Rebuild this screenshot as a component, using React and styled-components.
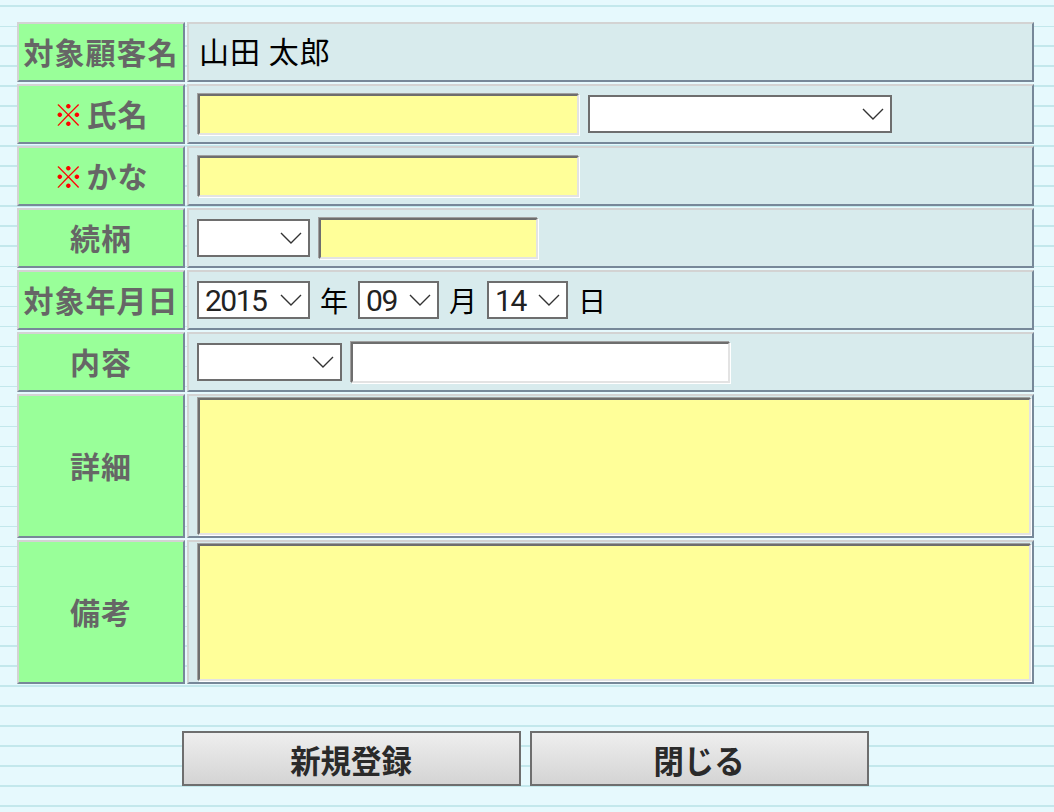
import React from 'react'
import styled, { createGlobalStyle } from 'styled-components'

const GlobalStyle = createGlobalStyle`
  html, body {
    margin: 0;
    padding: 0;
  }
  body {
    min-height: 812px;
    background: repeating-linear-gradient(
      to bottom,
      #e6f9fd 0px,
      #e6f9fd 5.5px,
      #c3e8ec 5.5px,
      #c3e8ec 7.5px,
      #e6f9fd 7.5px,
      #e6f9fd 20px
    );
    font-family: 'Noto Sans CJK JP', 'Noto Sans', sans-serif;
  }
`

const Chevron = () => (
  <svg width="22" height="12" viewBox="0 0 22 12">
    <polyline points="1,1 11,11 21,1" fill="none" stroke="#333" strokeWidth="1.4" />
  </svg>
)

const Select = ({ width, value }) => (
  <SelectBox $width={width}>
    <SelectField defaultValue={value || ''}>
      <option value={value || ''}>{value || ''}</option>
    </SelectField>
    <ChevronWrap>
      <Chevron />
    </ChevronWrap>
  </SelectBox>
)

const App = () => {
  return (
    <>
      <GlobalStyle />
      <Page>
        <FormGrid>
          <Label>対象顧客名</Label>
          <Value>
            <Static>山田 太郎</Static>
          </Value>

          <Label>
            <Required>※</Required>氏名
          </Label>
          <Value>
            <TextInput $width={381} />
            <Select width={304} />
          </Value>

          <Label>
            <Required>※</Required>かな
          </Label>
          <Value>
            <TextInput $width={381} />
          </Value>

          <Label>続柄</Label>
          <Value>
            <Select width={113} />
            <TextInput $width={219} />
          </Value>

          <Label>対象年月日</Label>
          <Value $gap={10}>
            <Select width={113} value="2015" />
            <Unit>年</Unit>
            <Select width={81} value="09" />
            <Unit>月</Unit>
            <Select width={81} value="14" />
            <Unit>日</Unit>
          </Value>

          <Label>内容</Label>
          <Value>
            <Select width={145} />
            <TextInput $width={379} $white />
          </Value>

          <Label $tall>詳細</Label>
          <Value $tall>
            <TextArea />
          </Value>

          <Label $tall>備考</Label>
          <Value $tall>
            <TextArea />
          </Value>
        </FormGrid>

        <Buttons>
          <Button>
            <ButtonText>新規登録</ButtonText>
          </Button>
          <Button>
            <ButtonText>閉じる</ButtonText>
          </Button>
        </Buttons>
      </Page>
    </>
  )
}

export default App

const Page = styled.div`
  padding: 20px 0 0 15px;
`

const FormGrid = styled.div`
  display: grid;
  grid-template-columns: 168px 847px;
  gap: 2px;
  padding: 2px;
  width: max-content;
`

const Cell = styled.div`
  box-sizing: border-box;
  height: ${(p) => (p.$tall ? '144px' : '60px')};
  border: 2px solid;
  border-color: #d3d3d3 #778899 #778899 #d3d3d3;
  display: flex;
  align-items: center;
`

const Label = styled(Cell)`
  background: #99ff99;
  justify-content: center;
  color: #666666;
  font-size: 30px;
  font-weight: 700;
  letter-spacing: 1px;
  white-space: nowrap;
  padding-bottom: 3px;
`

const Required = styled.span`
  color: #ff0000;
  font-weight: 400;
  margin-right: 2px;
`

const Value = styled(Cell)`
  background: #d8ebed;
  padding-left: 8px;
  gap: ${(p) => (p.$gap ? `${p.$gap}px` : '8px')};
  align-items: ${(p) => (p.$tall ? 'flex-start' : 'center')};
`

const Static = styled.span`
  font-size: 30px;
  color: #000;
  margin-left: 2px;
  padding-bottom: 4px;
  letter-spacing: 1px;
`

const Unit = styled.span`
  font-size: 28px;
  color: #000;
  line-height: 1;
`

const TextInput = styled.input.attrs({ type: 'text' })`
  box-sizing: border-box;
  width: ${(p) => p.$width}px;
  height: 41px;
  margin: 0 1px;
  background: ${(p) => (p.$white ? '#ffffff' : '#ffff99')};
  border: 2px solid;
  border-color: #6e6e6e #e3e3e3 #e3e3e3 #6e6e6e;
  box-shadow: -1px -1px 0 #a0a0a0, 1px 1px 0 #ffffff;
  outline: none;
  padding: 0 6px;
  font-size: 26px;
`

const TextArea = styled.textarea`
  box-sizing: border-box;
  flex: 1;
  height: 137px;
  margin: 2px 1px 0 1px;
  background: #ffff99;
  border: 2px solid;
  border-color: #6e6e6e #e3e3e3 #e3e3e3 #6e6e6e;
  box-shadow: -1px -1px 0 #a0a0a0, 1px 1px 0 #ffffff;
  outline: none;
  resize: none;
  font-size: 24px;
`

const SelectBox = styled.div`
  position: relative;
  width: ${(p) => p.$width}px;
  height: 38px;
  flex: none;
`

const SelectField = styled.select`
  appearance: none;
  box-sizing: border-box;
  width: 100%;
  height: 100%;
  margin: 0;
  border: 2px solid #6e6e6e;
  border-radius: 0;
  background: #ffffff;
  padding: 0 0 0 6px;
  font-family: 'Roboto', 'Liberation Sans', sans-serif;
  font-size: 30px;
  letter-spacing: -1.5px;
  color: #222;
  outline: none;
`

const ChevronWrap = styled.span`
  position: absolute;
  right: 8px;
  top: 13px;
  line-height: 0;
  pointer-events: none;
`

const Buttons = styled.div`
  display: flex;
  gap: 9px;
  margin-top: 45px;
  padding-left: 167px;
`

const Button = styled.button`
  box-sizing: border-box;
  width: 339px;
  height: 55px;
  border: 2px solid #6e6e6e;
  border-radius: 0;
  background: linear-gradient(to bottom, #eeeeee, #d4d4d4);
  display: flex;
  align-items: center;
  justify-content: center;
  padding: 0;
  cursor: pointer;
`

const ButtonText = styled.span`
  display: inline-block;
  font-family: 'Noto Sans CJK JP', sans-serif;
  font-size: 32px;
  font-weight: 700;
  color: #2a2a2a;
  letter-spacing: 0;
  transform: scaleX(0.95);
  line-height: 1;
`
